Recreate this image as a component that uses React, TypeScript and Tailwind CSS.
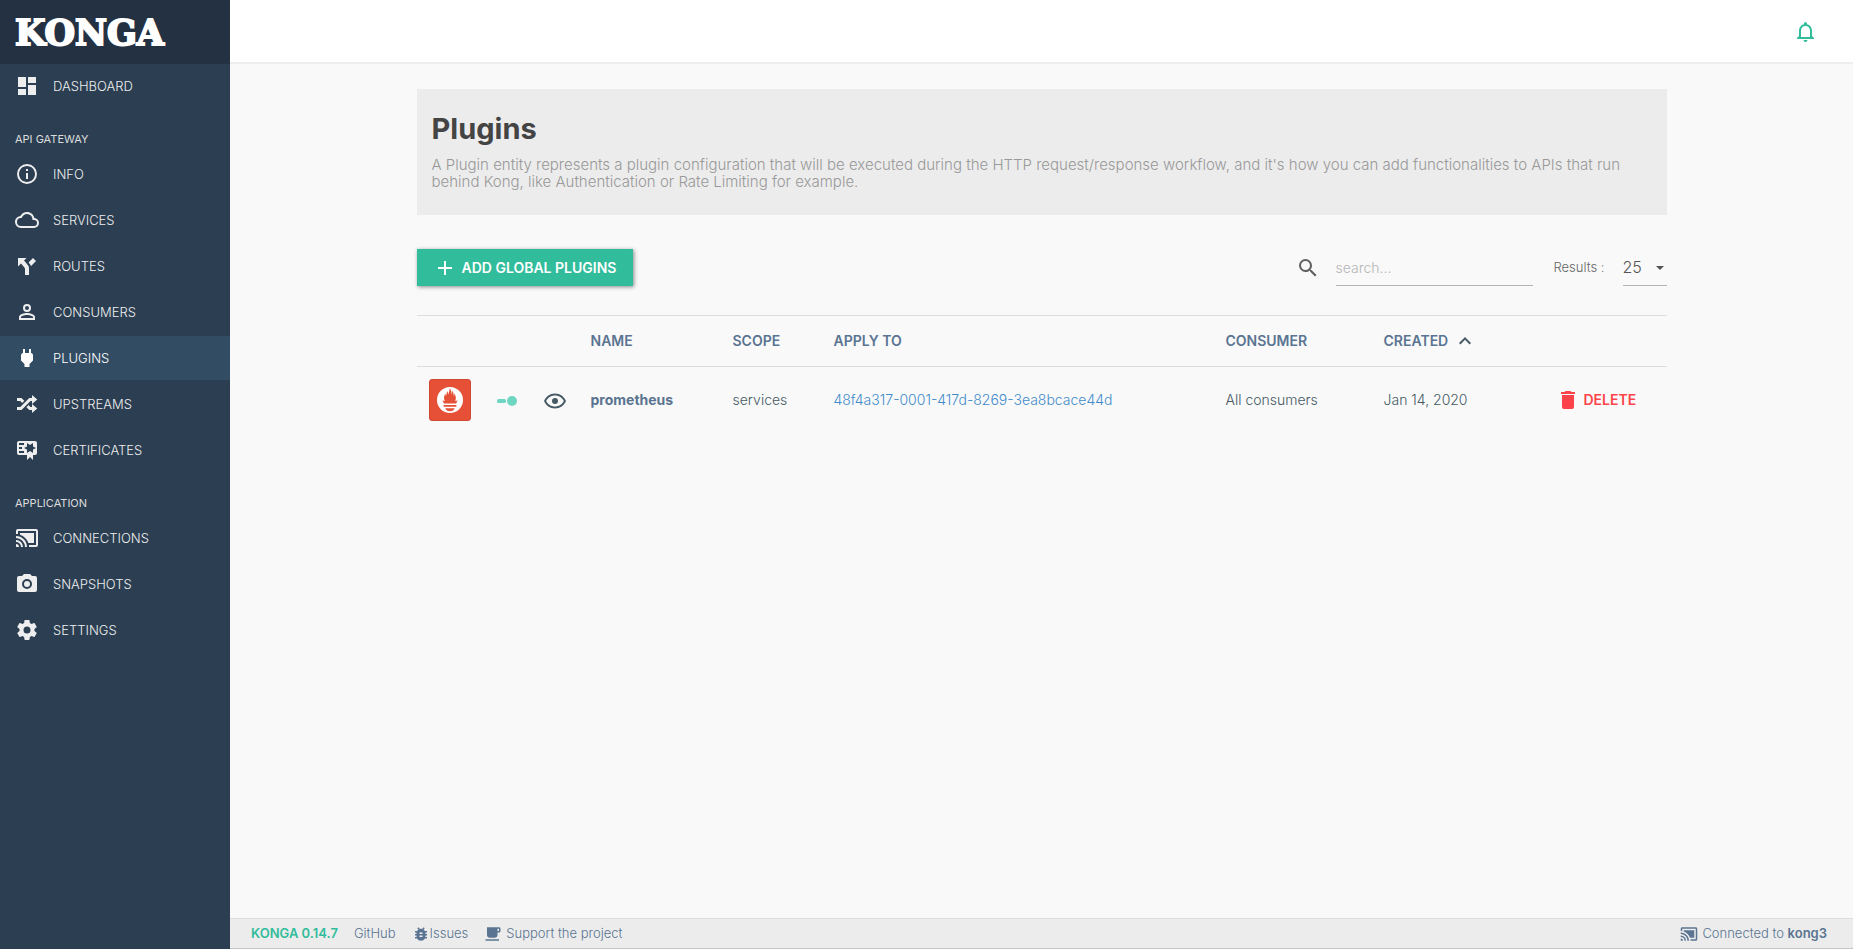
import type { ReactNode } from "react";

const paths = {
  dashboard: "M13,3V9H21V3M13,21H21V11H13M3,21H11V15H3M3,13H11V3H3V13Z",
  info: "M11,9H13V7H11M12,20C7.59,20 4,16.41 4,12C4,7.59 7.59,4 12,4C16.41,4 20,7.59 20,12C20,16.41 16.41,20 12,20M12,2A10,10 0 0,0 2,12A10,10 0 0,0 12,22A10,10 0 0,0 22,12A10,10 0 0,0 12,2M11,17H13V11H11V17Z",
  cloud: "M19,18H6A4,4 0 0,1 2,14A4,4 0 0,1 6,10H6.71C7.37,7.69 9.5,6 12,6A5.5,5.5 0 0,1 17.5,11.5V12H19A3,3 0 0,1 22,15A3,3 0 0,1 19,18M19.35,10.03C18.67,6.59 15.64,4 12,4C9.11,4 6.6,5.64 5.35,8.03C2.34,8.36 0,10.9 0,14A6,6 0 0,0 6,20H19A5,5 0 0,0 24,15C24,12.36 21.95,10.22 19.35,10.03Z",
  fork: "M3,4V12.5L6,9.5L9,13C10,14 10,15 10,15V21H14V14C14,14 14,13 13.47,12C12.94,11 12,10 12,10L9,6.58L11.5,4M18,4L13.54,8.47L14,9C14,9 14.93,10 15.47,11C15.68,11.4 15.8,11.79 15.87,12.13L21,7",
  account: "M12,4A4,4 0 0,1 16,8A4,4 0 0,1 12,12A4,4 0 0,1 8,8A4,4 0 0,1 12,4M12,6A2,2 0 0,0 10,8A2,2 0 0,0 12,10A2,2 0 0,0 14,8A2,2 0 0,0 12,6M12,13C14.67,13 20,14.33 20,17V20H4V17C4,14.33 9.33,13 12,13M12,14.9C9.03,14.9 5.9,16.36 5.9,17V18.1H18.1V17C18.1,16.36 14.97,14.9 12,14.9Z",
  plug: "M16,7V3H14V7H10V3H8V7H8C7,7 6,8 6,9V14.5L9.5,18V21H14.5V18L18,14.5V9C18,8 17,7 16,7Z",
  shuffle: "M17,3L22.25,7.5L17,12L22.25,16.5L17,21V18H14.26L11.44,15.18L13.56,13.06L15.5,15H17V12L17,9H15.5L6.5,18H2V15H5.26L14.26,6H17V3M2,6H6.5L9.32,8.82L7.2,10.94L5.26,9H2V6Z",
  certificate: "M4,3C2.89,3 2,3.89 2,5V15A2,2 0 0,0 4,17H12V22L15,19L18,22V17H20A2,2 0 0,0 22,15V8L22,6V5A2,2 0 0,0 20,3H16V3H4M12,5L15,7L18,5V8.5L21,10L18,11.5V15L15,13L12,15V11.5L9,10L12,8.5V5M4,5H9V7H4V5M4,9H7V11H4V9M4,13H9V15H4V13Z",
  cast: "M21,3H3C1.89,3 1,3.89 1,5V8H3V5H21V19H14V21H21A2,2 0 0,0 23,19V5C23,3.89 22.1,3 21,3M1,10V12A9,9 0 0,1 10,21H12C12,14.92 7.07,10 1,10M19,7H5V8.63C8.96,9.91 12.09,13.04 13.37,17H19M1,14V16A5,5 0 0,1 6,21H8A7,7 0 0,0 1,14M1,18V21H4A3,3 0 0,0 1,18Z",
  camera: "M4,4H7L9,2H15L17,4H20A2,2 0 0,1 22,6V18A2,2 0 0,1 20,20H4A2,2 0 0,1 2,18V6A2,2 0 0,1 4,4M12,7A5,5 0 0,0 7,12A5,5 0 0,0 12,17A5,5 0 0,0 17,12A5,5 0 0,0 12,7M12,9A3,3 0 0,1 15,12A3,3 0 0,1 12,15A3,3 0 0,1 9,12A3,3 0 0,1 12,9Z",
  settings: "M12,15.5A3.5,3.5 0 0,1 8.5,12A3.5,3.5 0 0,1 12,8.5A3.5,3.5 0 0,1 15.5,12A3.5,3.5 0 0,1 12,15.5M19.43,12.97C19.47,12.65 19.5,12.33 19.5,12C19.5,11.67 19.47,11.34 19.43,11L21.54,9.37C21.73,9.22 21.78,8.95 21.66,8.73L19.66,5.27C19.54,5.05 19.27,4.96 19.05,5.05L16.56,6.05C16.04,5.66 15.5,5.32 14.87,5.07L14.5,2.42C14.46,2.18 14.25,2 14,2H10C9.75,2 9.54,2.18 9.5,2.42L9.13,5.07C8.5,5.32 7.96,5.66 7.44,6.05L4.95,5.05C4.73,4.96 4.46,5.05 4.34,5.27L2.34,8.73C2.21,8.95 2.27,9.22 2.46,9.37L4.57,11C4.53,11.34 4.5,11.67 4.5,12C4.5,12.33 4.53,12.65 4.57,12.97L2.46,14.63C2.27,14.78 2.21,15.05 2.34,15.27L4.34,18.73C4.46,18.95 4.73,19.03 4.95,18.95L7.44,17.94C7.96,18.34 8.5,18.68 9.13,18.93L9.5,21.58C9.54,21.82 9.75,22 10,22H14C14.25,22 14.46,21.82 14.5,21.58L14.87,18.93C15.5,18.67 16.04,18.34 16.56,17.94L19.05,18.95C19.27,19.03 19.54,18.95 19.66,18.73L21.66,15.27C21.78,15.05 21.73,14.78 21.54,14.63L19.43,12.97Z",
  bell: "M16,17H7V10.5C7,8 9,6 11.5,6C14,6 16,8 16,10.5M18,16V10.5C18,7.43 15.86,4.86 13,4.18V3.5A1.5,1.5 0 0,0 11.5,2A1.5,1.5 0 0,0 10,3.5V4.18C7.13,4.86 5,7.43 5,10.5V16L3,18V19H20V18M11.5,22A2,2 0 0,0 13.5,20H9.5A2,2 0 0,0 11.5,22Z",
  plus: "M19,13H13V19H11V13H5V11H11V5H13V11H19V13Z",
  magnify: "M9.5,3A6.5,6.5 0 0,1 16,9.5C16,11.11 15.41,12.59 14.44,13.73L14.71,14H15.5L20.5,19L19,20.5L14,15.5V14.71L13.73,14.44C12.59,15.41 11.11,16 9.5,16A6.5,6.5 0 0,1 3,9.5A6.5,6.5 0 0,1 9.5,3M9.5,5C7,5 5,7 5,9.5C5,12 7,14 9.5,14C12,14 14,12 14,9.5C14,7 12,5 9.5,5Z",
  bug: "M14,12H10V10H14M14,16H10V14H14M20,8H17.19C16.74,7.22 16.12,6.55 15.37,6.04L17,4.41L15.59,3L13.42,5.17C12.96,5.06 12.5,5 12,5C11.5,5 11.04,5.06 10.59,5.17L8.41,3L7,4.41L8.62,6.04C7.88,6.55 7.26,7.22 6.81,8H4V10H6.09C6.04,10.33 6,10.66 6,11V12H4V14H6V15C6,15.34 6.04,15.67 6.09,16H4V18H6.81C7.85,19.79 9.78,21 12,21C14.22,21 16.15,19.79 17.19,18H20V16H17.91C17.96,15.67 18,15.34 18,15V14H20V12H18V11C18,10.66 17.96,10.33 17.91,10H20V8Z",
  coffee: "M2,21H20V19H2M20,8H18V5H20M20,3H4V13A4,4 0 0,0 8,17H14A4,4 0 0,0 18,13V10H20A2,2 0 0,0 22,8V5C22,3.89 21.1,3 20,3Z",
  trash: "M19,4H15.5L14.5,3H9.5L8.5,4H5V6H19M6,19A2,2 0 0,0 8,21H16A2,2 0 0,0 18,19V7H6V19Z",
  eye: "M12,9A3,3 0 0,1 15,12A3,3 0 0,1 12,15A3,3 0 0,1 9,12A3,3 0 0,1 12,9M12,4.5C17,4.5 21.27,7.61 23,12C21.27,16.39 17,19.5 12,19.5C7,19.5 2.73,16.39 1,12C2.73,7.61 7,4.5 12,4.5M3.18,12C4.83,15.36 8.24,17.5 12,17.5C15.76,17.5 19.17,15.36 20.82,12C19.17,8.64 15.76,6.5 12,6.5C8.24,6.5 4.83,8.64 3.18,12Z",
  chevronUp: "M7.41,15.41L12,10.83L16.59,15.41L18,14L12,8L6,14L7.41,15.41Z",
};

type IconName = keyof typeof paths;

function Icon({ name, className = "size-6" }: { name: IconName; className?: string }) {
  return (
    <svg viewBox="0 0 24 24" fill="currentColor" aria-hidden="true" className={`shrink-0 ${className}`}>
      <path d={paths[name]} />
    </svg>
  );
}

function NavItem({ icon, active = false, children }: { icon: IconName; active?: boolean; children: ReactNode }) {
  return (
    <a
      href="#"
      aria-current={active ? "page" : undefined}
      className={`mb-0.5 flex h-11 items-center gap-3.5 pl-[15px] text-[13px] ${
        active ? "bg-[#324c64] text-white" : "text-[#eeeeee]"
      }`}
    >
      <Icon name={icon} />
      <span className="pt-0.5">{children}</span>
    </a>
  );
}

function NavHeading({ children }: { children: ReactNode }) {
  return <h2 className="flex h-[42px] items-end px-[15px] pb-1 text-[11px] leading-[18px] font-normal text-[#dddddd]">{children}</h2>;
}

function Sidebar() {
  return (
    <aside className="w-[230px] shrink-0 bg-[#2b3e52] font-light">
      <div className="flex h-16 items-center bg-[#233142] pl-[15px]">
        <span className="font-['DejaVu_Serif',serif] text-[35px] leading-none font-bold text-white [-webkit-text-stroke:2px_white]">
          KONGA
        </span>
      </div>
      <nav aria-label="Main">
        <NavItem icon="dashboard">DASHBOARD</NavItem>
        <NavHeading>API GATEWAY</NavHeading>
        <NavItem icon="info">INFO</NavItem>
        <NavItem icon="cloud">SERVICES</NavItem>
        <NavItem icon="fork">ROUTES</NavItem>
        <NavItem icon="account">CONSUMERS</NavItem>
        <NavItem icon="plug" active>PLUGINS</NavItem>
        <NavItem icon="shuffle">UPSTREAMS</NavItem>
        <NavItem icon="certificate">CERTIFICATES</NavItem>
        <NavHeading>APPLICATION</NavHeading>
        <NavItem icon="cast">CONNECTIONS</NavItem>
        <NavItem icon="camera">SNAPSHOTS</NavItem>
        <NavItem icon="settings">SETTINGS</NavItem>
      </nav>
    </aside>
  );
}

function PrometheusLogo() {
  return (
    <svg viewBox="0 0 42 42" role="img" aria-label="Prometheus" className="size-[42px]">
      <rect x="0.5" y="0.5" width="41" height="41" rx="2.5" fill="#e55036" stroke="#cf4a33" />
      <circle cx="21" cy="21" r="13" fill="#fff" />
      <path
        fill="#e55036"
        d="M13.2 21.6C14.1 22.6 14.6 23.4 14.9 24.4H27.1C27.5 23.4 28 22.6 28.8 21.6L26.2 22C26.9 20.6 27 19.2 26.6 17.6C26.3 16.4 26 15.4 25.9 14.2C25.3 15.2 25.2 16.200 24.900 17.400C24.500 15.300 24.400 13.200 23.500 11.600C23.300 13.200 23 14.200 22.700 15.700C22.500 13.200 22.400 11 20.700 9.200C20.800 11.400 19.700 13.200 19.400 15.800C19.200 14.400 18.900 13.200 18.200 12C18 14 17.200 15.400 17 17.200C16.800 16.200 16.500 15.200 16 14.400C15.900 15.800 15.300 16.600 15.100 17.800C14.900 19.400 15.200 20.700 15.900 22ZM14.600 26H27.400V27.800H14.600ZM16.400 29.300H25.600C25.300 31.200 23.400 32.300 21 32.300S16.700 31.200 16.400 29.300Z"
      />
    </svg>
  );
}

function Columns() {
  return (
    <colgroup>
      <col className="w-[66px]" />
      <col className="w-12" />
      <col className="w-12" />
      <col className="w-[142px]" />
      <col className="w-[101px]" />
      <col className="w-[392px]" />
      <col className="w-[158px]" />
      <col className="w-[176px]" />
      <col className="w-[119px]" />
    </colgroup>
  );
}

function PluginTable() {
  return (
    <table className="w-full table-fixed text-left text-sm whitespace-nowrap text-[#455a64]">
      <Columns />
      <thead className="border-y border-[#dddddd] text-[#5a7491]">
        <tr className="h-[51px]">
          <td />
          <td />
          <td />
          <th scope="col" className="px-3 font-semibold">NAME</th>
          <th scope="col" className="px-3 font-semibold">SCOPE</th>
          <th scope="col" className="px-3 font-semibold">APPLY TO</th>
          <th scope="col" className="px-3 font-semibold">CONSUMER</th>
          <th scope="col" aria-sort="ascending" className="px-3 font-semibold">
            <button type="button" className="flex items-center gap-[5px]">
              CREATED
              <Icon name="chevronUp" className="size-6 text-[#455a64]" />
            </button>
          </th>
          <td />
        </tr>
      </thead>
      <tbody>
        <tr className="h-[66px]">
          <td className="px-3"><PrometheusLogo /></td>
          <td className="px-3">
            <button type="button" role="switch" aria-checked="true" aria-label="Enabled" className="flex items-center">
              <svg viewBox="0 0 24 24" className="size-6" fill="#6fd6c1" aria-hidden="true">
                <rect x="2" y="11" width="9" height="4" rx="1.5" />
                <circle cx="17" cy="13" r="5" />
              </svg>
            </button>
          </td>
          <td className="px-3">
            <button type="button" aria-label="View plugin" className="flex items-center pt-0.5">
              <Icon name="eye" />
            </button>
          </td>
          <td className="px-3"><a href="#" className="font-bold text-[#5a7491]">prometheus</a></td>
          <td className="px-3">services</td>
          <td className="px-3"><a href="#" className="text-[#428bca]">48f4a317-0001-417d-8269-3ea8bcace44d</a></td>
          <td className="px-3">All consumers</td>
          <td className="px-3">Jan 14, 2020</td>
          <td className="px-2">
            <button type="button" className="flex items-center gap-1 font-semibold text-[#fc4349]">
              <Icon name="trash" />
              DELETE
            </button>
          </td>
        </tr>
      </tbody>
    </table>
  );
}

function Toolbar() {
  return (
    <div className="mt-[34px] mb-[29px] flex items-center">
      <button
        type="button"
        className="flex h-[37px] items-center gap-[5px] bg-[#31bc9b] px-[17px] pl-4 text-sm font-semibold text-white shadow-[1px_1px_4px_rgba(0,0,0,0.45)]"
      >
        <Icon name="plus" />
        ADD GLOBAL PLUGINS
      </button>
      <label htmlFor="search" className="ml-auto text-[#5f5f5f]">
        <Icon name="magnify" />
      </label>
      <input
        id="search"
        type="text"
        aria-label="Search"
        placeholder="search..."
        className="ml-4 h-[37px] w-[197px] border-b border-[#b5b5b5] bg-transparent text-sm outline-none placeholder:text-[#b5b5b5]"
      />
      <label htmlFor="results" className="ml-[21px] w-[69px] text-[13px] text-[#666666]">Results :</label>
      <span className="relative flex w-11 items-center">
        <select
          id="results"
          defaultValue="25"
          className="h-[37px] w-full appearance-none border-b border-[#b5b5b5] bg-transparent text-base text-[#555555] outline-none"
        >
          <option>25</option>
          <option>50</option>
          <option>100</option>
        </select>
        <svg viewBox="0 0 8 4" className="pointer-events-none absolute right-[3px] h-1 w-2" fill="#555555" aria-hidden="true">
          <path d="M0 0h8L4 4z" />
        </svg>
      </span>
    </div>
  );
}

function Footer() {
  return (
    <footer className="flex h-[31px] items-center gap-4 border-y border-t-[#dddddd] border-b-[#c4c4c4] bg-[#ececec] pr-[26px] pb-0.5 pl-[21px] text-[13px] leading-4 text-[#5a7491]">
      <span className="font-semibold text-[#31bc9b]">KONGA 0.14.7</span>
      <a href="#">GitHub</a>
      <a href="#" className="flex items-center">
        <Icon name="bug" className="mt-0.5 size-[18px]" />
        Issues
      </a>
      <a href="#" className="flex items-center gap-1">
        <Icon name="coffee" className="mt-0.5 size-[18px]" />
        Support the project
      </a>
      <span className="ml-auto flex items-center gap-1">
        <Icon name="cast" className="mt-0.5 size-[18px]" />
        <span>Connected to <a href="#" className="font-semibold">kong3</a></span>
      </span>
    </footer>
  );
}

export default function App() {
  return (
    <div className="flex min-h-screen font-['Inter',sans-serif]">
      <Sidebar />
      <div className="flex min-w-0 flex-1 flex-col bg-[#f9f9f9] font-light">
        <header className="flex h-16 items-center justify-end border-b-2 border-[#eeeeee] bg-white pt-0.5 pr-[35px]">
          <button type="button" aria-label="Notifications" className="text-[#31bc9b]">
            <Icon name="bell" />
          </button>
        </header>
        <main className="mx-auto w-full max-w-[1250px] flex-1 pt-[25px]">
          <section className="bg-[#ececec] px-[15px] pt-[22px] pb-[25px]">
            <h1 className="text-[29px] leading-9 font-bold text-[#444444]">Plugins</h1>
            <p className="mt-[9px] text-[15px] leading-[17px] text-[#999999]">
              A Plugin entity represents a plugin configuration that will be executed during the HTTP request/response
              workflow, and it's how you can add functionalities to APIs that run behind Kong, like Authentication or Rate
              Limiting for example.
            </p>
          </section>
          <Toolbar />
          <PluginTable />
        </main>
        <Footer />
      </div>
    </div>
  );
}
